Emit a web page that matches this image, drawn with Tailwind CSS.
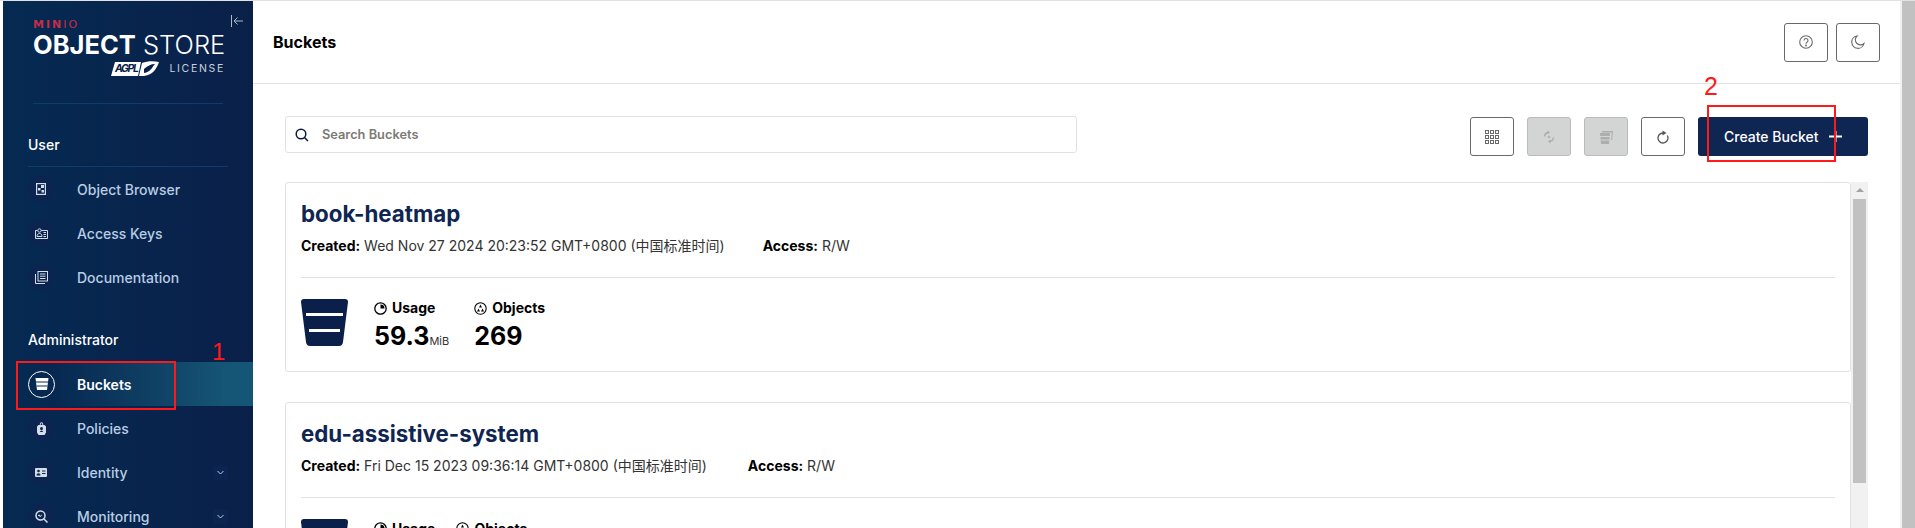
<!DOCTYPE html>
<html>
<head>
<meta charset="utf-8">
<script src="https://cdn.jsdelivr.net/npm/@tailwindcss/browser@4"></script>
</head>
<body class="bg-white overflow-hidden">
<div class="relative flex w-[1915px] h-[528px] overflow-hidden pl-[3px] bg-white font-['Inter','Noto_Sans_CJK_SC',sans-serif] border-t border-[#e2e2e2]">
  <!-- Sidebar -->
  <aside class="relative w-[250px] h-[527px] shrink-0 bg-gradient-to-r from-[#052a52] to-[#0a2049] flex flex-col text-white overflow-hidden">
    <div class="relative shrink-0 h-[103px] mx-[30px] pt-[18px] border-b border-[#0f3d6b]">
      <div class="text-[11px] leading-[11px] font-bold tracking-[2px] text-[#c72c48] h-[11px] font-['DejaVu_Sans',sans-serif]">MIN<span class="font-normal">IO</span></div>
      <div class="mt-[1px] text-[25.5px] leading-[28px] whitespace-nowrap"><span class="font-bold">OBJECT</span> <span class="font-light">STORE</span></div>
      <div class="flex items-center justify-end mt-[2px] gap-[10px]">
        <svg width="48" height="16" viewBox="0 0 48 16"><path d="M4 1h26l-3 14H0z" fill="#fff"/><path d="M31 2c5-2 12-2 17-1-2 6-6 13-15 14H28z" fill="#fff"/><path d="M33 8c3-3 7-5 11-5-3 3-4 8-11 9z" fill="#0a2049"/><text x="4" y="10.500" font-size="10.500" font-weight="700" font-style="italic" fill="#0a2049" textLength="24">AGPL</text></svg>
        <span class="mr-[-2px] text-[10.5px] tracking-[1.7px] text-[#c9d1dc]">LICENSE</span>
      </div>
      <svg class="absolute left-[197px] top-[14px]" width="14" height="12" viewBox="0 0 14 12" fill="none" stroke="#aeb8c6" stroke-width="1"><path d="M1.500 0v12M13 6H4M7.500 2.500 4 6l3.500 3.500"/></svg>
    </div>
    <div class="shrink-0 ml-[25px] mt-[31px] w-[200px] text-[14px] leading-[20px] font-medium pb-[11px] border-b border-[#0f3d6b]">User</div>
    <nav class="shrink-0 flex flex-col">
      <div class="flex items-center h-[44px] pl-[25px] text-[#b9cde4] text-[14px] font-medium"><span class="w-[26px] h-[26px] rounded-full bg-[#0b2450] flex items-center justify-center"><svg width="10" height="12" viewBox="0 0 10 12" fill="none" stroke="#d5dde8" stroke-width="1.200"><rect x=".6" y=".6" width="8.800" height="10.800"/><rect x="5" y="2" width="3" height="3" fill="#d5dde8" stroke="none"/><rect x="2" y="5" width="2.500" height="2.500" fill="#d5dde8" stroke="none"/><rect x="5.500" y="7" width="2.500" height="2.500" fill="#d5dde8" stroke="none"/></svg></span><span class="ml-[23px]">Object Browser</span></div>
      <div class="flex items-center h-[44px] pl-[25px] text-[#b9cde4] text-[14px] font-medium"><span class="w-[26px] h-[26px] rounded-full bg-[#0b2450] flex items-center justify-center"><svg width="13" height="11" viewBox="0 0 13 11" fill="none" stroke="#d5dde8"><path d="M2.500 2.500H.5v8h12v-8H6.500"/><circle cx="4.500" cy="2.500" r="1.700"/><path d="M2 8.500c0-2 1-3 2.500-3s2.500 1 2.500 3zM8.500 4.500h2.500M8.500 6.500h2.500M8.500 8.500h2.500"/></svg></span><span class="ml-[23px]">Access Keys</span></div>
      <div class="flex items-center h-[44px] pl-[25px] text-[#b9cde4] text-[14px] font-medium"><span class="w-[26px] h-[26px] rounded-full bg-[#0b2450] flex items-center justify-center"><svg width="13" height="13" viewBox="0 0 13 13" fill="none" stroke="#d5dde8"><rect x="3" y=".5" width="9.500" height="9.500"/><path d="M5 3h5.500M5 5.200h5.500M5 7.500h5.500M.5 3v9.500H10"/></svg></span><span class="ml-[23px]">Documentation</span></div>
    </nav>
    <div class="shrink-0 ml-[25px] mt-[31px] text-[14px] leading-[20px] font-medium">Administrator</div>
    <nav class="shrink-0 mt-[12px] flex flex-col">
      <div class="flex items-center h-[44px] pl-[25px] text-white text-[14px] font-semibold bg-gradient-to-r from-transparent from-20% to-[#155677] to-90%"><span class="w-[27px] h-[27px] rounded-full border border-white flex items-center justify-center"><svg width="14" height="12" viewBox="0 0 14 12" fill="#fff"><path d="M.5 0h13l-1.500 12H2z"/><path d="M1 4h12M1.500 8h11" stroke="#0a3050" stroke-width="1.200"/></svg></span><span class="ml-[22px]">Buckets</span></div>
      <div class="flex items-center h-[44px] pl-[25px] text-[#b9cde4] text-[14px] font-medium"><span class="w-[26px] h-[26px] rounded-full bg-[#0b2450] flex items-center justify-center"><svg width="9" height="13" viewBox="0 0 9 13" fill="#d5dde8"><path d="M2.800 3V2a1.700 1.700 0 0 1 3.400 0v1H7.500L9 4.500v6L7.500 13h-6L0 10.500v-6L1.500 3zM3.700 3h1.600V2a.8.8 0 0 0-1.600 0z"/><circle cx="4.500" cy="6.500" r="1.500" fill="#0b2450"/><path d="M3 10a1.500 1.500 0 0 1 3 0z" fill="#0b2450"/></svg></span><span class="ml-[23px]">Policies</span></div>
      <div class="flex items-center h-[44px] pl-[25px] text-[#b9cde4] text-[14px] font-medium"><span class="w-[26px] h-[26px] rounded-full bg-[#0b2450] flex items-center justify-center"><svg width="12" height="9" viewBox="0 0 12 9" fill="#d5dde8"><rect width="12" height="9" rx="1"/><circle cx="3.500" cy="3" r="1.300" fill="#0b2450"/><path d="M1.500 7.500c0-1.500 1-2.200 2-2.200s2 .7 2 2.200zM7 2.500h3.500v1H7zM7 5h3.500v1H7z" fill="#0b2450"/></svg></span><span class="ml-[23px]">Identity</span><span class="ml-auto mr-[25px] w-[15px] h-[15px] rounded-[2px] bg-[#0b2450] flex items-center justify-center"><svg width="7" height="5" viewBox="0 0 7 5" fill="none" stroke="#b9cde4"><path d="M.5 1 3.500 4l3-3"/></svg></span></div>
      <div class="flex items-center h-[44px] pl-[25px] text-[#b9cde4] text-[14px] font-medium"><span class="w-[26px] h-[26px] rounded-full bg-[#0b2450] flex items-center justify-center"><svg width="13" height="13" viewBox="0 0 13 13" fill="none" stroke="#d5dde8" stroke-width="1.500"><circle cx="5.500" cy="5.500" r="4.500"/><path d="M9 9l3.500 3.500"/><path d="M3 6l1.200-1.200 1 2 1.500-2" stroke-width="1"/></svg></span><span class="ml-[23px]">Monitoring</span><span class="ml-auto mr-[25px] w-[15px] h-[15px] rounded-[2px] bg-[#0b2450] flex items-center justify-center"><svg width="7" height="5" viewBox="0 0 7 5" fill="none" stroke="#b9cde4"><path d="M.5 1 3.500 4l3-3"/></svg></span></div>
    </nav>
  </aside>

  <!-- Main -->
  <main class="w-[1647px] shrink-0 flex flex-col">
    <header class="h-[83px] shrink-0 border-b border-[#e2e2e2] flex items-center pl-[20px] pr-[20px]">
      <h1 class="text-[16px] font-bold text-[#000]">Buckets</h1>
      <div class="ml-auto flex gap-[8px]">
        <button class="w-[44px] h-[39px] border border-[#696969] rounded-[3px] flex items-center justify-center"><svg width="14" height="14" viewBox="0 0 14 14" fill="none" stroke="#696969" stroke-width="1.100"><circle cx="7" cy="7" r="6.300"/><path d="M5 5.500a2 2 0 1 1 3 1.700c-.7.400-1 .8-1 1.600"/><circle cx="7" cy="10.500" r=".4"/></svg></button>
        <button class="w-[44px] h-[39px] border border-[#696969] rounded-[3px] flex items-center justify-center"><svg width="14" height="14" viewBox="0 0 14 14" fill="none" stroke="#696969" stroke-width="1.100"><path d="M13 8.500A6.200 6.200 0 1 1 6 1 4.800 4.800 0 0 0 13 8.500z"/></svg></button>
      </div>
    </header>
    <div class="pl-[32px] pr-[32px] pt-[32px] flex flex-col">
      <div class="flex items-start">
        <div class="w-[792px] h-[37px] border border-[#e2e2e2] rounded-[3px] flex items-center pl-[9px]">
          <svg width="14" height="14" viewBox="0 0 14 14" fill="none" stroke="#081c42" stroke-width="1.500"><circle cx="6" cy="6" r="4.800"/><path d="M9.500 9.500 13 13"/></svg>
          <span class="ml-[13px] pt-px text-[12.8px] font-semibold text-[#7c7a76]">Search Buckets</span>
        </div>
        <div class="ml-auto flex gap-[13px] mt-px">
          <button class="w-[44px] h-[39px] border border-[#696969] rounded-[3px] flex items-center justify-center"><svg width="14" height="14" viewBox="0 0 14 14" fill="none" stroke="#696969"><rect x=".5" y=".5" width="3" height="3"/><rect x="5.500" y=".5" width="3" height="3"/><rect x="10.500" y=".5" width="3" height="3"/><rect x=".5" y="5.500" width="3" height="3"/><rect x="5.500" y="5.500" width="3" height="3"/><rect x="10.500" y="5.500" width="3" height="3"/><rect x=".5" y="10.500" width="3" height="3"/><rect x="5.500" y="10.500" width="3" height="3"/><rect x="10.500" y="10.500" width="3" height="3"/></svg></button>
          <button class="w-[44px] h-[39px] bg-[#d3d5d4] border border-[#bbbbbb] rounded-[3px] flex items-center justify-center"><svg width="12" height="14" viewBox="0 0 12 14" fill="none" stroke="#adadad" stroke-width="1.400"><path d="M1.500 6.500A4.500 4.500 0 0 1 5 2.500M10.500 7.500A4.500 4.500 0 0 1 7 11.500"/><path d="M4.500.5 7 2.500 4.500 4.500zM7.500 9.500 5 11.500l2.500 2z" fill="#adadad" stroke="none"/><path d="M6 5.500 7.500 7 6 8.500 4.500 7z" fill="#adadad" stroke="none"/></svg></button>
          <button class="w-[44px] h-[39px] bg-[#d3d5d4] border border-[#bbbbbb] rounded-[3px] flex items-center justify-center"><svg width="15" height="14" viewBox="0 0 15 14" fill="#adadad"><path d="M3 1h11l-.8 9h-1l.6-7.500H3z"/><path d="M1 3h10l-1 11H2z"/><path d="M1 6.500h10M1.500 10h9" stroke="#d3d5d4"/></svg></button>
          <button class="w-[44px] h-[39px] border border-[#696969] rounded-[3px] flex items-center justify-center"><svg width="12" height="14" viewBox="0 0 12 14" fill="none" stroke="#555" stroke-width="1.300"><path d="M6 3A5 5 0 1 0 10.300 5.500"/><path d="M5.500.5 9.500 3l-4 2.500z" fill="#555" stroke="none"/></svg></button>
          <button class="w-[170px] h-[39px] bg-[#0f2552] rounded-[3px] flex items-center pl-[26px] text-white text-[14px] font-medium"><span>Create Bucket</span><svg class="ml-[10px]" width="13" height="13" viewBox="0 0 13 13" stroke="#fff" stroke-width="2"><path d="M0 6.500h13M6.500 1v11"/></svg></button>
        </div>
      </div>

      <div class="relative mt-[26px] h-[346px] overflow-hidden flex flex-col gap-[30px]">
        <div class="w-[1566px] h-[190px] shrink-0 border border-[#e2e2e2] rounded-[3px] px-[15px] pt-[18px]">
          <div class="text-[22.3px] leading-[26px] font-bold text-[#0f2552]">book-heatmap</div>
          <div class="mt-[10px] text-[14px] leading-[18px] text-[#333] whitespace-nowrap"><b class="font-bold text-[#000]">Created:</b> Wed Nov 27 2024 20:23:52 GMT+0800 (中国标准时间)<b class="ml-[38px] font-bold text-[#000]">Access:</b> R/W</div>
          <div class="mt-[22px] border-t border-[#e2e2e2]"></div>
          <div class="mt-[21px] flex">
            <svg width="47" height="47" viewBox="0 0 47 47"><path d="M3 0h41q3 0 3 3l-5 40q-.5 4-4 4H9q-3.500 0-4-4L0 3q0-3 3-3z" fill="#0a1f49"/><rect x="5" y="14" width="37" height="3" fill="#fff"/><rect x="8" y="30" width="31" height="3" fill="#fff"/></svg>
            <div class="ml-[26px]">
              <div class="flex items-center text-[14px] leading-[18px] font-bold text-[#000]"><svg class="mr-[5px]" width="13" height="13" viewBox="0 0 13 13"><circle cx="6.500" cy="6.500" r="5.700" fill="none" stroke="#000" stroke-width="1.300"/><path d="M6.500 2.500a4 4 0 0 1 4 4h-4z" fill="#000"/></svg>Usage</div>
              <div class="mt-[4px] text-[25px] leading-[30px] font-bold text-[#000]">59.3<span class="text-[11px] font-normal text-[#333]">MiB</span></div>
            </div>
            <div class="ml-[25px]">
              <div class="flex items-center text-[14px] leading-[18px] font-bold text-[#000]"><svg class="mr-[5px]" width="13" height="13" viewBox="0 0 13 13"><circle cx="6.500" cy="6.500" r="5.700" fill="none" stroke="#000" stroke-width="1.100"/><path d="M6.500 2.500 8 5.500H5zM3 9.500 4.500 6.500 6 9.500zM7 9.500l1.500-3 1.500 3z" fill="#000"/></svg>Objects</div>
              <div class="mt-[4px] text-[25px] leading-[30px] font-bold text-[#000]">269</div>
            </div>
          </div>
        </div>
        <div class="w-[1566px] h-[190px] shrink-0 border border-[#e2e2e2] rounded-[3px] px-[15px] pt-[18px]">
          <div class="text-[22.3px] leading-[26px] font-bold text-[#0f2552]">edu-assistive-system</div>
          <div class="mt-[10px] text-[14px] leading-[18px] text-[#333] whitespace-nowrap"><b class="font-bold text-[#000]">Created:</b> Fri Dec 15 2023 09:36:14 GMT+0800 (中国标准时间)<b class="ml-[41px] font-bold text-[#000]">Access:</b> R/W</div>
          <div class="mt-[22px] border-t border-[#e2e2e2]"></div>
          <div class="mt-[21px] flex">
            <svg width="47" height="47" viewBox="0 0 47 47"><path d="M3 0h41q3 0 3 3l-5 40q-.5 4-4 4H9q-3.500 0-4-4L0 3q0-3 3-3z" fill="#0a1f49"/></svg>
            <div class="ml-[26px] flex items-center h-[18px] text-[14px] font-bold text-[#000]"><svg class="mr-[5px]" width="13" height="13" viewBox="0 0 13 13"><circle cx="6.500" cy="6.500" r="5.700" fill="none" stroke="#000" stroke-width="1.300"/><path d="M6.500 2.500a4 4 0 0 1 4 4h-4z"/></svg>Usage</div>
            <div class="ml-[21px] flex items-center h-[18px] text-[14px] font-bold text-[#000]"><svg class="mr-[5px]" width="13" height="13" viewBox="0 0 13 13"><circle cx="6.500" cy="6.500" r="5.700" fill="none" stroke="#000" stroke-width="1.100"/><path d="M6.500 2.500 8 5.500H5zM3 9.500 4.500 6.500 6 9.500zM7 9.500l1.500-3 1.500 3z" fill="#000"/></svg>Objects</div>
          </div>
        </div>
        <!-- inner scrollbar -->
        <div class="absolute right-0 top-0 w-[17px] h-full bg-[#f1f1f1] flex flex-col items-center">
          <div class="mt-[6px] w-0 h-0 border-x-[4px] border-x-transparent border-b-[4px] border-b-[#a3a3a3]"></div>
          <div class="mt-[7px] w-[13px] h-[284px] bg-[#c1c1c1]"></div>
        </div>
      </div>
    </div>
  </main>
  <!-- Outer scrollbar -->
  <div class="w-[15px] h-full shrink-0 bg-[#f1f1f1] pl-[2px]"><div class="h-full bg-[#c1c1c1]"></div></div>

  <!-- Annotations -->
  <div class="absolute left-[16px] top-[360px] w-[160px] h-[49px] border-2 border-[#ff1a1a]"></div>
  <div class="absolute left-[212px] top-[337px] text-[24px] leading-[28px] text-[#ff1a1a] font-['Liberation_Sans',sans-serif]">1</div>
  <div class="absolute left-[1707px] top-[104px] w-[129px] h-[57px] border-2 border-[#ff1a1a]"></div>
  <div class="absolute left-[1704px] top-[71px] text-[25px] leading-[28px] text-[#ff1a1a] font-['Liberation_Sans',sans-serif]">2</div>
</div>
</body>
</html>
